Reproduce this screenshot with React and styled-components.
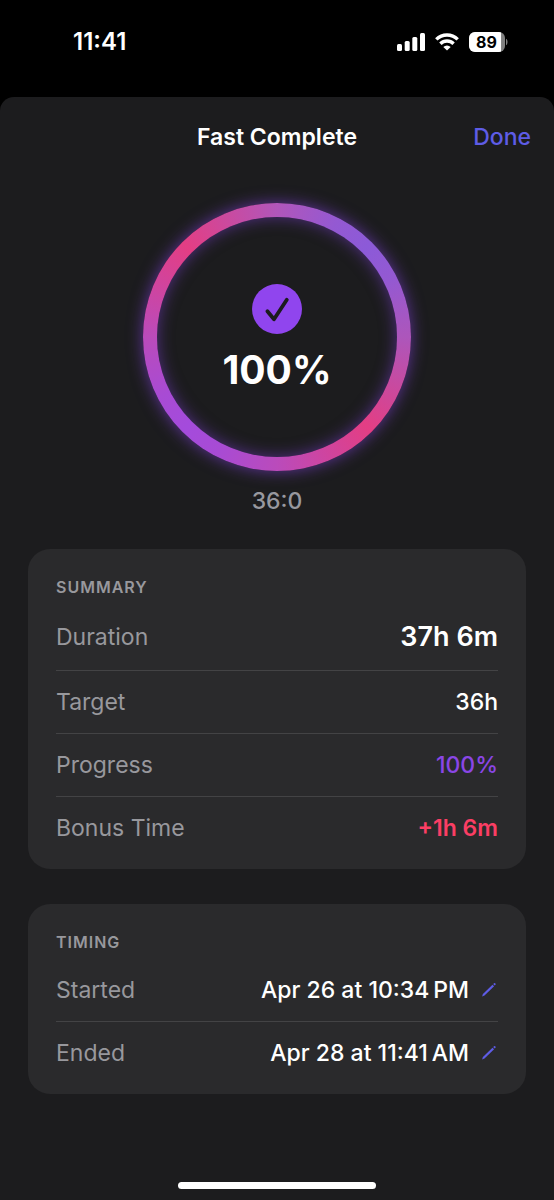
import React from 'react';
import styled, { createGlobalStyle } from 'styled-components';

const GlobalStyle = createGlobalStyle`
  * {
    box-sizing: border-box;
  }

  body {
    margin: 0;
    background-color: #000;
    color: #fff;
    font-family: Inter, 'Liberation Sans', sans-serif;
    -webkit-font-smoothing: antialiased;
  }

  button {
    padding: 0;
    border: 0;
    background: none;
    font: inherit;
    cursor: pointer;
  }
`;

const Screen = styled.div`
  min-height: 100vh;
  display: flex;
  flex-direction: column;
`;

const StatusBar = styled.div`
  height: 97px;
  padding: 0 46px 14px 73px;
  display: flex;
  align-items: center;
  justify-content: space-between;
`;

const Clock = styled.time`
  font-size: 24px;
  font-weight: 600;
`;

const StatusIcons = styled.div`
  display: flex;
  align-items: center;
  gap: 10px;
`;

const Sheet = styled.main`
  flex: 1;
  display: flex;
  flex-direction: column;
  border-radius: 14px 14px 0 0;
  background-color: #1c1c1e;
`;

const Header = styled.header`
  height: 80px;
  padding: 0 23px;
  display: grid;
  grid-template-columns: 1fr auto 1fr;
  align-items: center;
`;

const Title = styled.h1`
  grid-column: 2;
  margin: 0;
  font-size: 23px;
  font-weight: 600;
`;

const DoneButton = styled.button`
  justify-self: end;
  color: #5e5ce6;
  && {
    font-size: 23px;
    font-weight: 500;
  }
`;

const RingSection = styled.section`
  margin-top: 26px;
  display: flex;
  flex-direction: column;
  align-items: center;
`;

const Ring = styled.div`
  width: 268px;
  height: 268px;
  padding: 14px;
  border-radius: 50%;
  background: conic-gradient(
    from 45deg,
    #8c5ad8,
    #9459d2 5%,
    #ad56bb 12.5%,
    #e33e84 25%,
    #ba4bbb 37.5%,
    #a84bd4 45%,
    #a44bdc 50%,
    #a84bd4 55%,
    #ba4bbb 62.5%,
    #e33e84 75%,
    #b156ba 87.5%,
    #9459d2 95%,
    #8c5ad8
  );
  box-shadow: 0 0 16px rgba(138, 68, 236, 0.6);
`;

const RingCenter = styled.div`
  height: 100%;
  padding-top: 4px;
  display: flex;
  flex-direction: column;
  align-items: center;
  justify-content: center;
  gap: 12px;
  border-radius: 50%;
  background-color: #1c1c1e;
  box-shadow: inset 0 0 16px rgba(138, 68, 236, 0.5);
`;

const Percent = styled.div`
  font-size: 39px;
  font-weight: 700;
  line-height: 48px;
`;

const Goal = styled.div`
  margin-top: 16px;
  color: #98989f;
  font-size: 23px;
  font-weight: 500;
  line-height: 28px;
`;

const Cards = styled.div`
  padding: 34px 28px;
  display: flex;
  flex-direction: column;
  gap: 35px;
`;

const Card = styled.section`
  padding: 28px 28px 10px;
  border-radius: 22px;
  background-color: #2a2a2c;
`;

const CardTitle = styled.h2`
  margin: 0 0 6px;
  color: #98989d;
  font-size: 16px;
  font-weight: 600;
  letter-spacing: 1px;
  line-height: 20px;
  text-transform: uppercase;
`;

const Rows = styled.dl`
  margin: 0;
`;

const Row = styled.div`
  height: ${({ tall }) => (tall ? 67 : 63)}px;
  display: flex;
  align-items: center;
  justify-content: space-between;

  & + & {
    border-top: 1px solid #434345;
  }
`;

const Label = styled.dt`
  color: #98989d;
  font-size: 23px;
`;

const Value = styled.dd`
  margin: 0;
  display: flex;
  align-items: center;
  gap: 12px;
  color: ${({ color }) => color || '#fff'};
  font-size: ${({ large }) => (large ? 27 : 23)}px;
  font-weight: ${({ weight }) => weight || 500};
`;

const EditButton = styled.button`
  display: flex;
  color: #5e5ce6;
`;

const HomeIndicator = styled.div`
  width: 198px;
  height: 7px;
  margin: auto auto 11px;
  border-radius: 4px;
  background-color: #fff;
`;

const SignalIcon = () => (
  <svg width="28" height="18" viewBox="0 0 28 18" fill="#fff" aria-hidden="true">
    <rect x="0" y="11" width="5" height="7" rx="1.5" />
    <rect x="7.7" y="8" width="5" height="10" rx="1.5" />
    <rect x="15.3" y="4" width="5" height="14" rx="1.5" />
    <rect x="23" y="0" width="5" height="18" rx="1.5" />
  </svg>
);

const WifiIcon = () => (
  <svg width="24" height="18" viewBox="0 0 24 18" aria-hidden="true">
    <g fill="none" stroke="#fff" strokeWidth="3.4">
      <path d="M1.3 6.4a15.2 15.2 0 0 1 21.4 0" />
      <path d="M5.4 10.7a9.4 9.4 0 0 1 13.2 0" />
    </g>
    <path d="M12 17.6 8.3 13.9a5.3 5.3 0 0 1 7.4 0Z" fill="#fff" />
  </svg>
);

const BatteryIcon = ({ level }) => (
  <svg width="39" height="20" viewBox="0 0 39 20" role="img" aria-label="Battery">
    <clipPath id="battery">
      <rect width="36" height="20" rx="6" />
    </clipPath>
    <g clipPath="url(#battery)">
      <rect width="36" height="20" fill="#808080" />
      <rect width={(36 * level) / 100} height="20" fill="#fff" />
    </g>
    <path d="M37 6.7c2 .8 2 5.8 0 6.6Z" fill="#808080" />
    <text x="17.5" y="15.8" textAnchor="middle" fontSize="16" fontWeight="700">
      {level}
    </text>
  </svg>
);

const CheckIcon = () => (
  <svg width="50" height="50" viewBox="0 0 50 50" aria-hidden="true">
    <circle cx="25" cy="25" r="25" fill="#9045ee" />
    <path
      d="M15.4 27.2 22 35.2 34.8 15.8"
      fill="none"
      stroke="#1c1c1e"
      strokeWidth="3.8"
      strokeLinecap="round"
      strokeLinejoin="round"
    />
  </svg>
);

const PencilIcon = () => (
  <svg width="17" height="16" viewBox="0 0 17 16" fill="currentColor" aria-hidden="true">
    <path d="M1.1 14.6 1.9 12 11.5 2.7l1.6 1.6L3.5 13.6Z" />
    <path d="m12.2 2 .9-.8c.8-.5 2 .6 1.4 1.5l-.8.9Z" />
  </svg>
);

const summary = [
  { label: 'Duration', value: '37h 6m', weight: 600, large: true },
  { label: 'Target', value: '36h' },
  { label: 'Progress', value: '100%', color: '#8a46e6' },
  { label: 'Bonus Time', value: '+1h 6m', color: '#fb3e64', weight: 600 },
];

const timing = [
  { label: 'Started', value: 'Apr 26 at 10:34\u202fPM', editable: true },
  { label: 'Ended', value: 'Apr 28 at 11:41\u202fAM', editable: true },
];

const renderRow = ({ label, value, color, weight, large, editable }) => (
  <Row key={label} tall={large}>
    <Label>{label}</Label>
    <Value color={color} weight={weight} large={large}>
      {value}
      {editable && (
        <EditButton type="button" aria-label={`Edit ${label}`}>
          <PencilIcon />
        </EditButton>
      )}
    </Value>
  </Row>
);

const App = () => (
  <Screen>
    <GlobalStyle />
    <StatusBar>
      <Clock>11:41</Clock>
      <StatusIcons>
        <SignalIcon />
        <WifiIcon />
        <BatteryIcon level={89} />
      </StatusIcons>
    </StatusBar>
    <Sheet>
      <Header>
        <Title>Fast Complete</Title>
        <DoneButton type="button">Done</DoneButton>
      </Header>
      <RingSection>
        <Ring>
          <RingCenter>
            <CheckIcon />
            <Percent>100%</Percent>
          </RingCenter>
        </Ring>
        <Goal>36:0</Goal>
      </RingSection>
      <Cards>
        <Card>
          <CardTitle>Summary</CardTitle>
          <Rows>{summary.map(renderRow)}</Rows>
        </Card>
        <Card>
          <CardTitle>Timing</CardTitle>
          <Rows>{timing.map(renderRow)}</Rows>
        </Card>
      </Cards>
      <HomeIndicator />
    </Sheet>
  </Screen>
);

export default App;
